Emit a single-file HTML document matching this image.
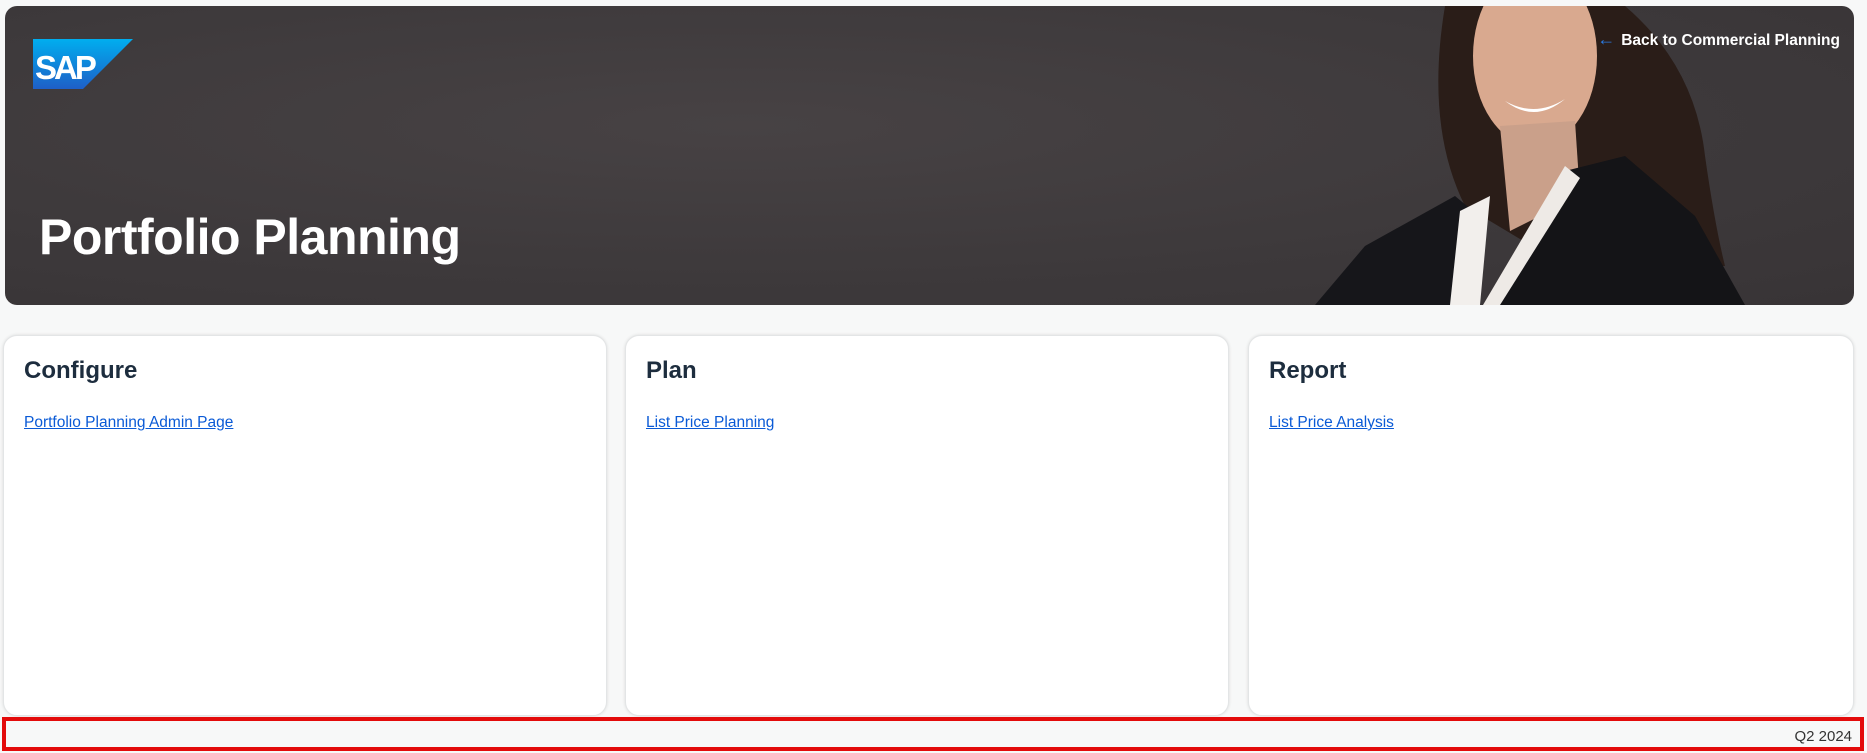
<!DOCTYPE html>
<html><head><meta charset="utf-8"><style>
*{box-sizing:border-box;margin:0;padding:0}
html,body{width:1867px;height:753px;overflow:hidden;background:#f7f8f8;font-family:"Liberation Sans",sans-serif}
.banner{position:absolute;left:5px;top:6px;width:1849px;height:299px;border-radius:12px;overflow:hidden;background:radial-gradient(ellipse at 40% 40%,#474244 0%,#3d393b 60%,#383436 100%)}
.title{position:absolute;left:34px;top:202px;color:#fff;font-size:50px;font-weight:bold;letter-spacing:-0.5px}
.back{position:absolute;right:14px;top:23px;color:#fff;font-size:15.5px;font-weight:bold}
.back span{color:#2a7ae2;margin-right:6px;font-size:18px}
.card{position:absolute;top:335px;height:381px;background:#fff;border-radius:14px;border:1px solid #e3e5e6;box-shadow:0 0 3px rgba(0,0,0,.12)}
.card h2{position:absolute;left:20px;top:21px;font-size:24px;color:#1d2d3e;font-weight:bold}
.card a{position:absolute;left:20px;top:78px;font-size:15.5px;color:#0a5ad6;text-decoration:underline}
.foot{position:absolute;left:2px;top:717px;width:1862px;height:34px;border:4px solid #e30b0b;background:#f7f8f8}
.foot span{position:absolute;right:8px;top:7px;font-size:15px;color:#333}
</style></head><body>
<div class="banner">
<svg width="1849" height="299" style="position:absolute;left:0;top:0">
<path d="M1440 0 L1620 0 Q1690 60 1700 150 Q1710 220 1720 260 L1560 260 L1460 200 Q1420 120 1440 0 Z" fill="#2a1d18"/>
<ellipse cx="1530" cy="50" rx="62" ry="90" fill="#d9a98f"/>
<path d="M1495 120 L1570 115 L1575 190 L1505 225 Z" fill="#caa08a"/>
<path d="M1310 299 L1360 240 L1450 190 L1480 215 L1460 299 Z" fill="#16161a"/>
<path d="M1560 165 L1620 150 L1690 210 L1740 299 L1480 299 Z" fill="#141417"/>
<path d="M1455 205 L1485 190 L1475 299 L1445 299 Z" fill="#f2efec"/>
<path d="M1560 160 L1575 172 L1495 299 L1478 299 Z" fill="#eeeae6"/>
<path d="M1500 95 Q1530 112 1560 93 Q1530 118 1500 95 Z" fill="#fff"/>
</svg>
<svg width="100" height="50" style="position:absolute;left:28px;top:33px" viewBox="0 0 100 50">
<defs><linearGradient id="g" x1="0" y1="0" x2="0" y2="1"><stop offset="0" stop-color="#00aeef"/><stop offset="1" stop-color="#1e5fc7"/></linearGradient></defs>
<path d="M0 0 H100 L50 50 H0 Z" fill="url(#g)"/>
<text x="2" y="40" font-family="Liberation Sans" font-weight="bold" font-size="33" fill="#fff" letter-spacing="-3">SAP</text>
</svg>
<div class="title">Portfolio Planning</div>
<div class="back"><span>←</span>Back to Commercial Planning</div>
</div>
<div class="card" style="left:3px;width:604px"><h2>Configure</h2><a>Portfolio Planning Admin Page</a></div>
<div class="card" style="left:625px;width:604px"><h2>Plan</h2><a>List Price Planning</a></div>
<div class="card" style="left:1248px;width:606px"><h2>Report</h2><a>List Price Analysis</a></div>
<div class="foot"><span>Q2 2024</span></div>
</body></html>
